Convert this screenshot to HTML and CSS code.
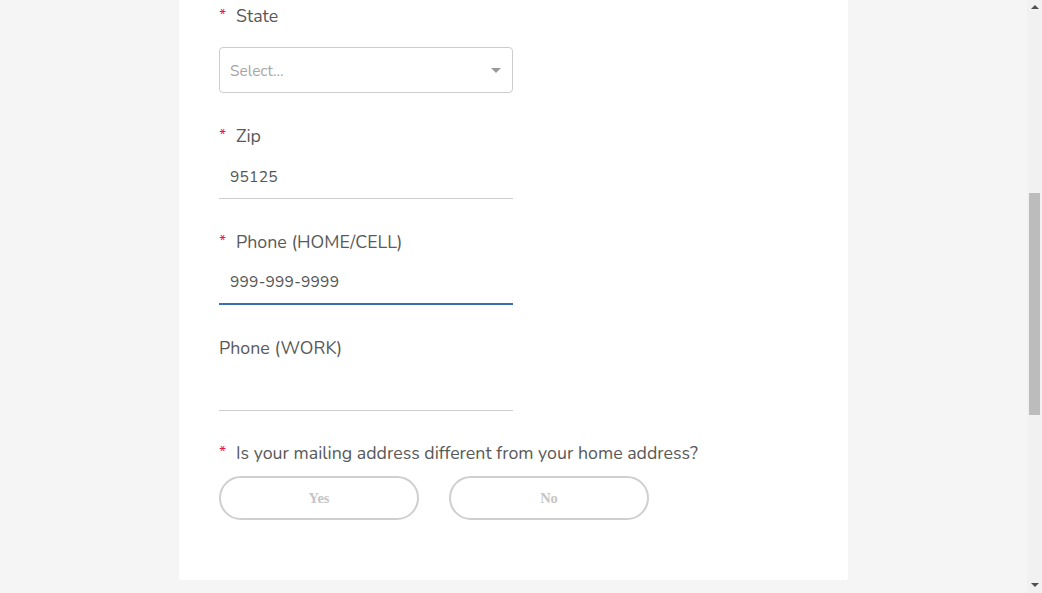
FILE: index.html
```html
<!DOCTYPE html>
<html>
<head>
<meta charset="utf-8">
<link rel="stylesheet" href="styles.css">
</head>
<body>
<div class="viewport">
  <main class="card">
    <div class="field">
      <label class="label"><span class="req">*</span>State</label>
      <div class="select">
        <span class="placeholder">Select...</span>
        <span class="caret"></span>
      </div>
    </div>
    <div class="field">
      <label class="label"><span class="req">*</span>Zip</label>
      <div class="input">95125</div>
    </div>
    <div class="field">
      <label class="label"><span class="req">*</span>Phone (HOME/CELL)</label>
      <div class="input focused">999-999-9999</div>
    </div>
    <div class="field">
      <label class="label">Phone (WORK)</label>
      <div class="input"></div>
    </div>
    <div class="field question">
      <label class="label"><span class="req">*</span>Is your mailing address different from your home address?</label>
      <div class="choices">
        <button class="choice">Yes</button>
        <button class="choice">No</button>
      </div>
    </div>
  </main>
</div>
<aside class="scrollbar">
  <div class="arrow up"></div>
  <div class="track">
    <div class="thumb"></div>
  </div>
  <div class="arrow down"></div>
</aside>
</body>
</html>
```

FILE: styles.css
```css
html, body {
  margin: 0;
  padding: 0;
  height: 593px;
  overflow: hidden;
}
body {
  display: flex;
  background: #f5f5f5;
  font-family: "Nunito", "Noto Sans", "Open Sans", sans-serif;
  color: #595959;
}
.viewport {
  flex: 1;
  display: flex;
  justify-content: center;
  align-items: flex-start;
}
.card {
  width: 669px;
  box-sizing: border-box;
  background: #fff;
  padding: 3px 40px 60px;
  border-radius: 0 0 3px 3px;
  display: flex;
  flex-direction: column;
}
.field {
  display: flex;
  flex-direction: column;
  margin-bottom: 30px;
}
.field.question {
  margin-bottom: 0;
}
.label {
  display: flex;
  align-items: center;
  height: 24px;
  box-sizing: border-box;
  padding-top: 2px;
  font-size: 17.8px;
  color: #595959;
}
.question .label {
  padding-top: 0;
}
.req {
  color: #ee1846;
  width: 17px;
  font-size: 16px;
  position: relative;
  top: -1px;
}
.select {
  margin-top: 20px;
  width: 294px;
  height: 46px;
  box-sizing: border-box;
  border: 1px solid #cccccc;
  border-radius: 4px;
  display: flex;
  align-items: center;
  justify-content: space-between;
  padding: 0 11px 0 10px;
}
.placeholder {
  font-size: 15.4px;
  color: #a6a6a6;
}
.caret {
  width: 0;
  height: 0;
  border-left: 5px solid transparent;
  border-right: 5px solid transparent;
  border-top: 5px solid #999;
  margin-top: 1px;
}
.input {
  margin-top: 8px;
  width: 294px;
  height: 44px;
  box-sizing: border-box;
  border-bottom: 1px solid #cccccc;
  padding: 1px 11px 0;
  display: flex;
  align-items: center;
  font-size: 15.6px;
  color: #555;
  letter-spacing: 0.2px;
}
.input.focused {
  border-bottom: 2px solid #3a6db3;
  padding-top: 0;
  padding-bottom: 1px;
}
.choices {
  margin-top: 11px;
  display: flex;
  gap: 30px;
}
.choice {
  width: 200px;
  height: 44px;
  border: 2px solid #cfcfcf;
  border-radius: 22px;
  background: #fff;
  font-family: "Liberation Serif", "Times New Roman", serif;
  font-weight: bold;
  font-size: 14.5px;
  color: #c5c5c5;
  padding: 0;
}
.scrollbar {
  width: 15px;
  background: #f1f1f1;
  display: flex;
  flex-direction: column;
  align-items: center;
}
.arrow {
  width: 0;
  height: 0;
  border-left: 4px solid transparent;
  border-right: 4px solid transparent;
  margin: 5px 0;
}
.arrow.up {
  border-bottom: 4px solid #505050;
  margin-top: 5px;
}
.arrow.down {
  border-top: 4px solid #505050;
  margin-bottom: 6px;
}
.track {
  flex: 1;
  align-self: stretch;
  display: flex;
  justify-content: center;
}
.thumb {
  width: 11px;
  height: 222px;
  margin-top: 179px;
  background: #bcbcbc;
}
```
